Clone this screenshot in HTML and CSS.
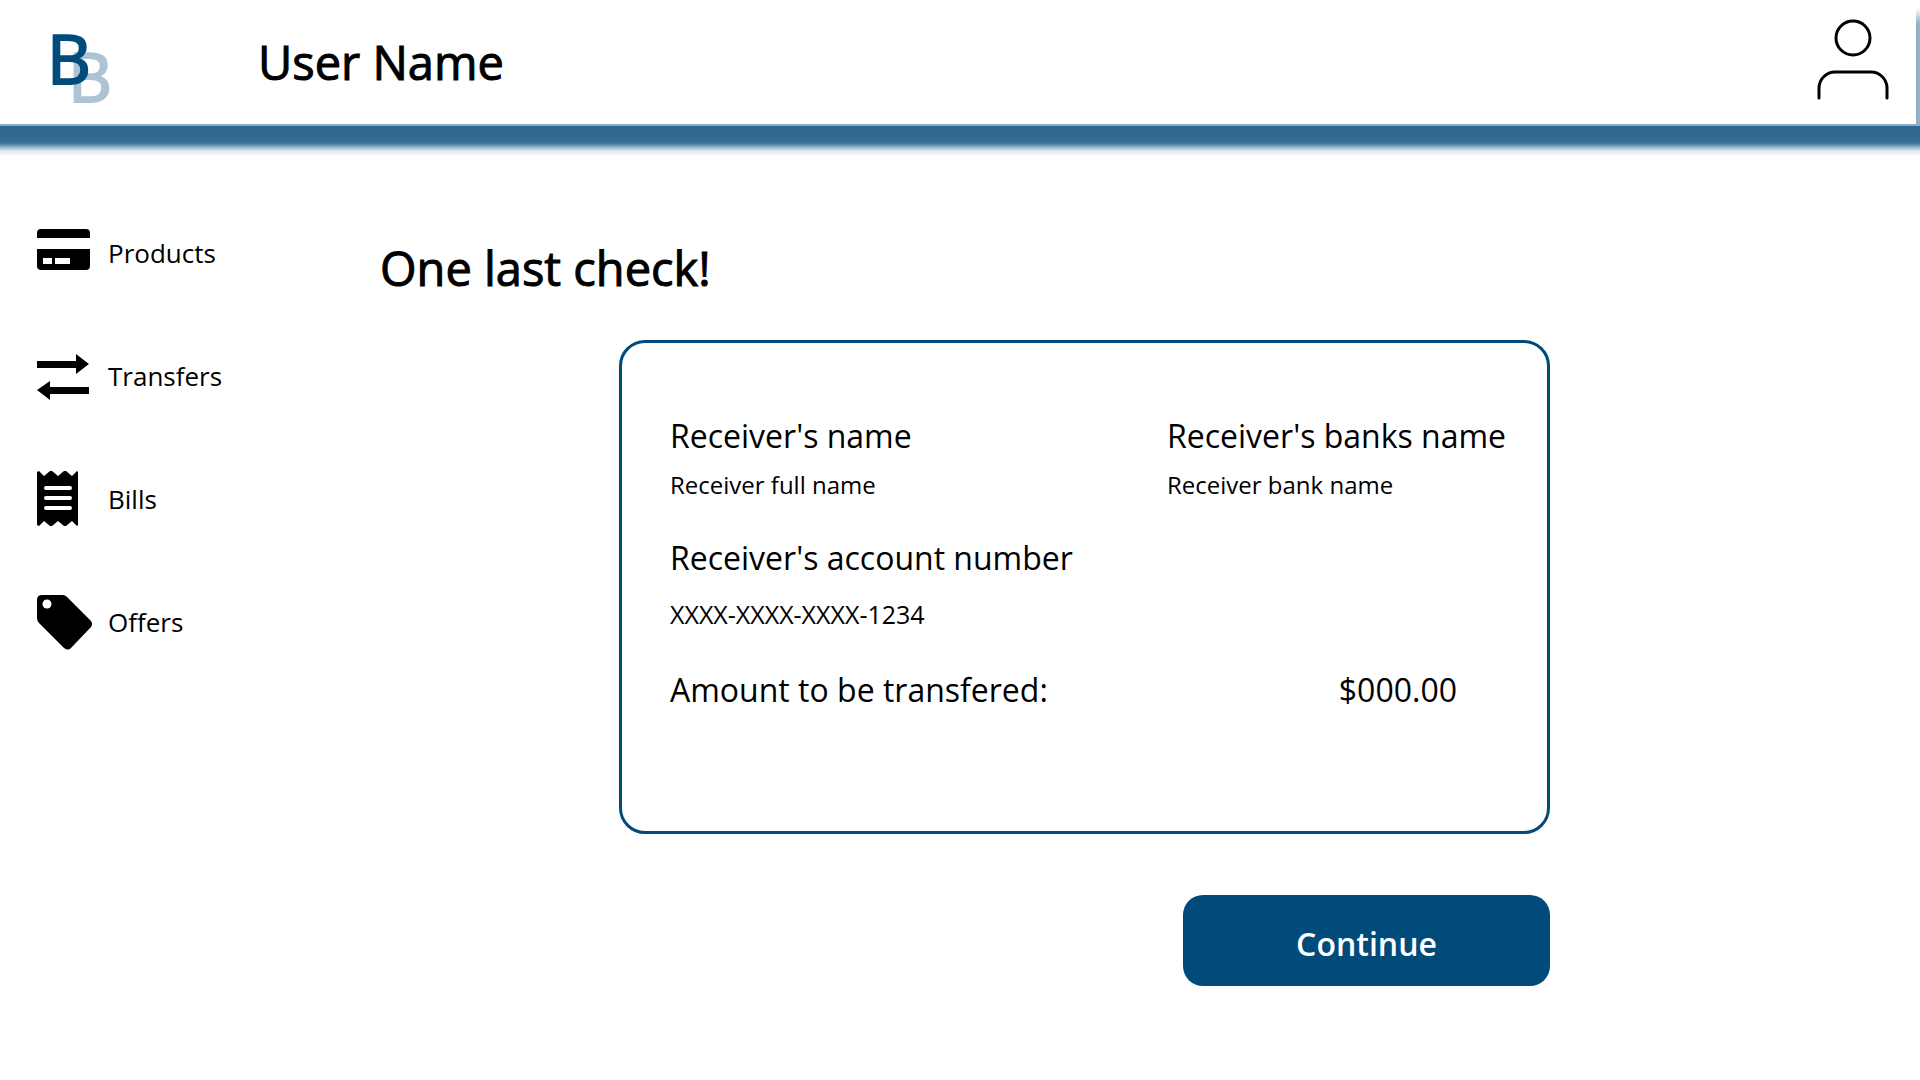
FILE: index.html
```html
<!DOCTYPE html>
<html lang="en">
<head>
<meta charset="utf-8">
<title>Transfer confirmation</title>
<link rel="stylesheet" href="styles.css">
</head>
<body>
<header class="topbar">
  <svg class="logo" width="60" height="80" viewBox="0 0 60 80" role="img" aria-label="BB">
    <text class="logo-back" x="16" y="80">B</text>
    <text class="logo-front" x="-5" y="62">B</text>
  </svg>
  <p class="user-name">User Name</p>
  <a class="profile" href="#" aria-label="Profile">
    <svg width="72" height="82" viewBox="0 0 72 82" fill="none" stroke="#000" stroke-width="3" stroke-linecap="round">
      <circle cx="36" cy="20" r="17"/>
      <path d="M2 80V70A16 16 0 0 1 18 54H54A16 16 0 0 1 70 70V80"/>
    </svg>
  </a>
</header>
<div class="topbar-edge"></div>
<div class="layout">
  <nav class="sidebar">
    <a class="nav-item" href="#">
      <svg width="56" height="56" viewBox="0 0 56 56"><path d="M0 13V8A4 4 0 0 1 4 4H49A4 4 0 0 1 53 8V13ZM0 24H53V41A4 4 0 0 1 49 45H4A4 4 0 0 1 0 41Z"/><path fill="#fff" d="M6 33H15V39H6ZM18 33H33V39H18Z"/></svg>
      <span>Products</span>
    </a>
    <a class="nav-item" href="#">
      <svg width="56" height="56" viewBox="0 0 56 56"><path d="M0 13H39V6L52 16L39 26V20H0ZM52 46H13V52L0 42L13 33V39H52Z"/></svg>
      <span>Transfers</span>
    </a>
    <a class="nav-item" href="#">
      <svg width="56" height="56" viewBox="0 0 56 56"><path d="M0 1L2 0L7 5L13 0H15L21 5L27 0H29L35 5L40 0L41 1V54L40 55L35 50L29 55H27L21 50L15 55H13L7 50L2 55L0 54Z"/><path stroke="#fff" stroke-width="4" stroke-linecap="round" d="M9 17H33M9 27H33M9 37H33"/></svg>
      <span>Bills</span>
    </a>
    <a class="nav-item" href="#">
      <svg width="56" height="56" viewBox="0 0 56 56"><path d="M5 1H26Q28 1 30 3L54 27Q56 30 54 33L34 54Q31 57 27 54L2 29Q0 27 0 24V6Q0 1 5 1Z"/><circle cx="10" cy="10" r="4.500" fill="#fff"/></svg>
      <span>Offers</span>
    </a>
  </nav>
  <main class="content">
    <h1 class="title">One last check!</h1>
    <div class="panel">
      <dl class="card">
        <div class="field">
          <dt>Receiver's name</dt>
          <dd>Receiver full name</dd>
        </div>
        <div class="field">
          <dt>Receiver's banks name</dt>
          <dd>Receiver bank name</dd>
        </div>
        <div class="field account">
          <dt>Receiver's account number</dt>
          <dd>XXXX-XXXX-XXXX-1234</dd>
        </div>
        <div class="amount">
          <dt>Amount to be transfered:</dt>
          <dd>$000.00</dd>
        </div>
      </dl>
      <button class="continue" type="button">Continue</button>
    </div>
  </main>
</div>
</body>
</html>
```
FILE: styles.css
```css
* {
  box-sizing: border-box;
}

body {
  margin: 0;
  background: #fff;
  color: #000;
  font-family: "Open Sans", "Noto Sans", sans-serif;
}

a {
  color: inherit;
  text-decoration: none;
}

svg {
  display: block;
  flex: none;
}

.topbar {
  display: flex;
  align-items: center;
  height: 124px;
  margin-right: 4px;
  padding: 0 27px 0 52px;
  background: #fff;
  box-shadow: 12px 16px 10px #8fafc4;
}

.logo {
  overflow: visible;
  font-size: 68px;
  stroke-width: 2px;
}

.logo-front {
  fill: #004b79;
  stroke: #004b79;
}

.logo-back {
  fill: #adc4d4;
  stroke: #adc4d4;
}

.user-name {
  margin: 0 0 0 146px;
  font-size: 47px;
  line-height: 64px;
  -webkit-text-stroke: 1px #000;
}

.profile {
  margin: 0 0 6px auto;
}

.topbar-edge {
  position: relative;
  height: 34px;
  border-top: 2px solid #8fafc4;
  background: linear-gradient(#2c688f 10px, #3b7296 17px, #8fafc4 21px, #dfe9ef 25px, #fff 30px);
}

.layout {
  display: grid;
  grid-template-columns: 380px minmax(0, 1fr);
}

.sidebar {
  display: flex;
  flex-direction: column;
  gap: 65px;
  padding: 66px 0 0 37px;
}

.nav-item {
  display: flex;
  align-items: center;
  gap: 15px;
  font-size: 26px;
  line-height: 58px;
}

.content {
  padding-top: 76px;
}

.title {
  margin: 0;
  font-size: 47px;
  line-height: 68px;
  font-weight: 400;
  -webkit-text-stroke: 1px #000;
}

.panel {
  width: 931px;
  max-width: 100%;
  margin: 38px 0 0 239px;
}

.card {
  display: grid;
  grid-template-columns: 497px auto;
  align-content: start;
  margin: 0;
  padding: 69px 30px 117px 48px;
  border: 3px solid #004b79;
  border-radius: 26px;
}

.card dt {
  font-size: 32px;
  line-height: 48px;
}

.card dd {
  margin: 0;
  font-size: 24px;
  line-height: 50px;
}

.account,
.amount {
  grid-column: 1 / -1;
  margin-top: 24px;
}

.card .account dd {
  padding: 7px 0 3px;
  font-size: 25px;
}

.amount {
  display: flex;
  justify-content: space-between;
  padding-right: 60px;
}

.card .amount dd {
  font-size: 32px;
  line-height: 48px;
}

.continue {
  display: block;
  width: 367px;
  height: 91px;
  margin: 61px 0 0 auto;
  padding: 6px 0 0;
  border: 0;
  border-radius: 20px;
  background: #004b79;
  color: #fff;
  font: 600 32px "Open Sans", "Noto Sans", sans-serif;
}
```
